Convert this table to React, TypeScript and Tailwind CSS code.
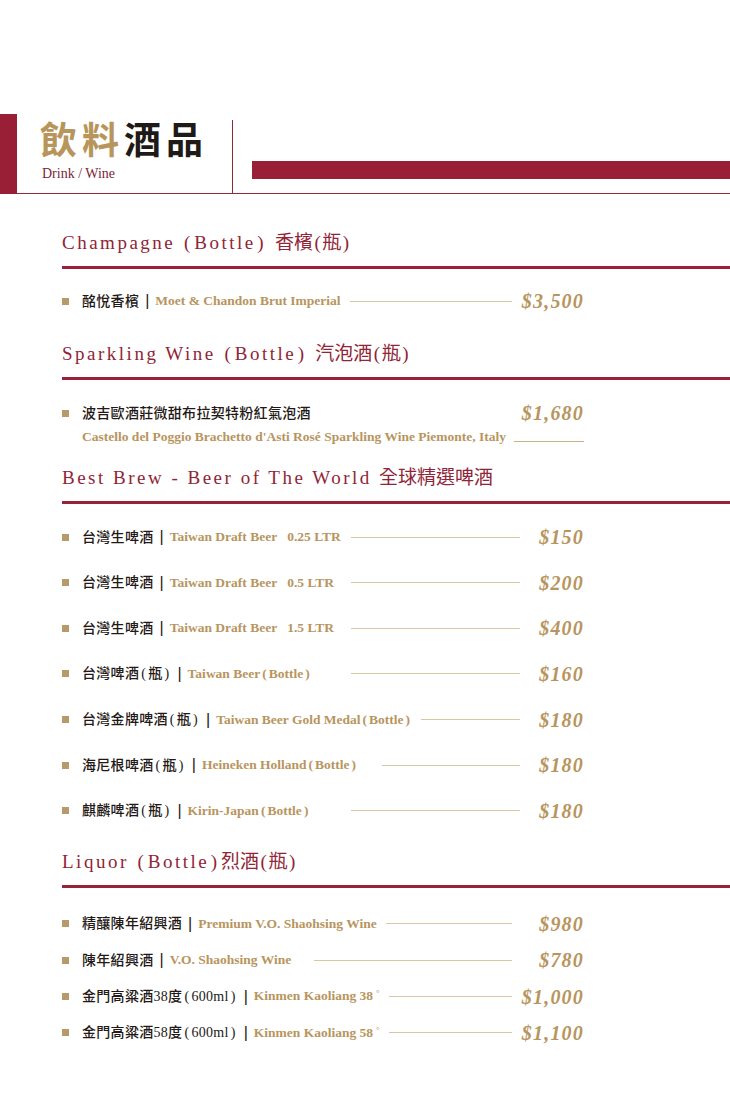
import React from "react";

type Item = {
  zh: string;
  en: React.ReactNode;
  price: string;
  minW?: string;
};

const zhFont = "font-['Liberation_Serif','Noto_Sans_CJK_TC',serif]";

// half-width parens with a little air, like the print menu
const paren = (text: string, pad = "px-[2px]") =>
  text.split(/([()])/).map((part, i) =>
    part === "(" || part === ")" ? (
      <span key={i} className={pad}>
        {part}
      </span>
    ) : (
      <React.Fragment key={i}>{part}</React.Fragment>
    )
  );

const champagne: Item[] = [
  { zh: "酩悅香檳", en: "Moet & Chandon Brut Imperial", price: "$3,500" },
];

const beers: Item[] = [
  {
    zh: "台灣生啤酒",
    en: (
      <>
        Taiwan Draft Beer<span className="ml-[10px]">0.25 LTR</span>
      </>
    ),
    price: "$150",
    minW: "min-w-[260px]",
  },
  {
    zh: "台灣生啤酒",
    en: (
      <>
        Taiwan Draft Beer<span className="ml-[10px]">0.5 LTR</span>
      </>
    ),
    price: "$200",
    minW: "min-w-[260px]",
  },
  {
    zh: "台灣生啤酒",
    en: (
      <>
        Taiwan Draft Beer<span className="ml-[10px]">1.5 LTR</span>
      </>
    ),
    price: "$400",
    minW: "min-w-[260px]",
  },
  { zh: "台灣啤酒(瓶)", en: paren("Taiwan Beer(Bottle)"), price: "$160", minW: "min-w-[260px]" },
  { zh: "台灣金牌啤酒(瓶)", en: paren("Taiwan Beer Gold Medal(Bottle)"), price: "$180", minW: "min-w-[260px]" },
  { zh: "海尼根啤酒(瓶)", en: paren("Heineken Holland(Bottle)"), price: "$180", minW: "min-w-[291px]" },
  { zh: "麒麟啤酒(瓶)", en: paren("Kirin-Japan(Bottle)"), price: "$180", minW: "min-w-[260px]" },
];

const degree = (n: string) => (
  <>
    Kinmen Kaoliang {n}
    <span className="relative -top-[4px] ml-[3px] text-[9px] font-normal">°</span>
  </>
);

const liquors: Item[] = [
  { zh: "精釀陳年紹興酒", en: "Premium V.O. Shaohsing Wine", price: "$980" },
  { zh: "陳年紹興酒", en: "V.O. Shaohsing Wine", price: "$780", minW: "min-w-[223px]" },
  { zh: "金門高粱酒38度(600ml)", en: degree("38"), price: "$1,000" },
  { zh: "金門高粱酒58度(600ml)", en: degree("58"), price: "$1,100" },
];

const Price: React.FC<{ value: string; w: string }> = ({ value, w }) => (
  <div
    className={`${w} shrink-0 text-right font-['Liberation_Serif',serif] text-[20px] font-bold italic leading-none tracking-[1.2px] text-[#b8955e]`}
  >
    {value}
  </div>
);

const Bullet = () => <span className="h-[7px] w-[7px] shrink-0 bg-[#b89a6a]" />;

const Row: React.FC<{ item: Item; priceW: string }> = ({ item, priceW }) => (
  <div className="flex h-[20px] w-[522px] items-center">
    <Bullet />
    <div className={`ml-[13px] flex items-center whitespace-nowrap ${item.minW ?? ""}`}>
      <span className={`${zhFont} text-[14px] font-medium tracking-[0.3px] text-[#231815]`}>{paren(item.zh)}</span>
      <span className="mx-[6px] font-['Liberation_Sans',sans-serif] text-[16px] text-[#231815]">|</span>
      <span className="font-['Liberation_Serif',serif] text-[13.5px] font-bold text-[#b8955e]">{item.en}</span>
    </div>
    <div className="ml-[9px] h-px flex-1 bg-[#d8c6a4]" />
    <Price value={item.price} w={priceW} />
  </div>
);

const SectionHeader: React.FC<{ en: string; zh: string; className: string }> = ({ en, zh, className }) => (
  <div className={className}>
    <h2 className="h-[24px] whitespace-nowrap font-['Liberation_Serif','Noto_Sans_CJK_TC',serif] text-[19px] leading-[24px] text-[#8f2537]">
      <span className="tracking-[2.5px]">{paren(en, "px-[1.5px]")}</span>
      <span>{paren(zh, "px-[1.5px]")}</span>
    </h2>
    <div className="mt-[11px] h-[3px] bg-[#9a2238]" />
  </div>
);

const App: React.FC = () => {
  return (
    <div className="h-[1094px] w-[730px] overflow-hidden bg-white pt-[114px]">
      {/* header */}
      <div className="flex h-[80px]">
        <div className="w-[17px] bg-[#981f35]" />
        <div className="flex flex-1 border-b border-[#8e2a3c]">
          <div className="mt-[6px] w-[216px] border-r border-[#8e2a3c] pl-[23px]">
            <div className="font-['Noto_Sans_CJK_TC',sans-serif] text-[37px] font-bold leading-none tracking-[5px]">
              <span className="text-[#b8955a]">飲料</span>
              <span className="text-[#1e1a17]">酒品</span>
            </div>
            <div className="mt-[10px] pl-[2px] font-['Liberation_Serif',serif] text-[14px] leading-none text-[#7d2638]">
              Drink / Wine
            </div>
          </div>
          <div className="mb-[14px] ml-[19px] h-[18px] flex-1 self-end bg-[#981f35]" />
        </div>
      </div>

      <div className="pl-[62px]">
        {/* Champagne */}
        <SectionHeader en="Champagne (Bottle) " zh="香檳(瓶)" className="mt-[37px]" />
        <div className="mt-[22px]">
          {champagne.map((it, i) => (
            <Row key={i} item={it} priceW="w-[72px]" />
          ))}
        </div>

        {/* Sparkling */}
        <SectionHeader en="Sparkling Wine (Bottle) " zh="汽泡酒(瓶)" className="mt-[31px]" />
        <div className="mt-[23px] w-[522px]">
          <div className="flex h-[20px] items-center">
            <Bullet />
            <span className={`ml-[13px] ${zhFont} text-[14px] font-medium tracking-[0.3px] text-[#231815]`}>
              波吉歐酒莊微甜布拉契特粉紅氣泡酒
            </span>
            <div className="flex-1" />
            <Price value="$1,680" w="w-[72px]" />
          </div>
          <div className="mt-[4px] flex h-[20px] items-center pl-[20px]">
            <span className="whitespace-nowrap font-['Liberation_Serif',serif] text-[13.5px] font-bold text-[#b8955e]">
              Castello del Poggio Brachetto d'Asti Rosé Sparkling Wine Piemonte, Italy
            </span>
            <div className="ml-auto mt-[8px] h-px w-[70px] bg-[#c9b089]" />
          </div>
        </div>

        {/* Beer */}
        <SectionHeader en="Best Brew - Beer of The World " zh="全球精選啤酒" className="mt-[19px]" />
        <div className="mt-[23px] flex flex-col gap-[25.67px]">
          {beers.map((it, i) => (
            <Row key={i} item={it} priceW="w-[64px]" />
          ))}
        </div>

        {/* Liquor */}
        <SectionHeader en="Liquor (Bottle)" zh="烈酒(瓶)" className="mt-[29px]" />
        <div className="mt-[26px] flex flex-col gap-[16.33px]">
          {liquors.map((it, i) => (
            <Row key={i} item={it} priceW="w-[72px]" />
          ))}
        </div>
      </div>
    </div>
  );
};

export default App;
